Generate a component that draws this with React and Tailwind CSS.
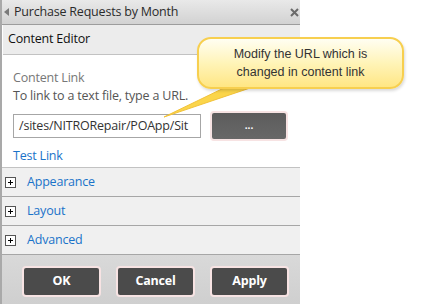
export default function App() {
  const sections = ["Appearance", "Layout", "Advanced"];
  return (
    <div className="relative w-[441px] h-[304px] bg-white overflow-hidden font-['Open_Sans','Noto_Sans',sans-serif]">
      {/* Tool pane */}
      <div className="w-[300px] h-[304px] flex flex-col border-l-2 border-[#a9a9a9]">
        {/* Title bar */}
        <div className="h-[25px] flex items-center bg-gradient-to-b from-[#e9e9e9] to-[#d2d2d2] border-b border-[#9c9c9c]">
          <svg width="5" height="8" viewBox="0 0 5 8" className="ml-[2px] mr-[5px]">
            <path d="M5 0 L0 4 L5 8 Z" fill="#7a7a7a" />
          </svg>
          <span className="text-[12.5px] text-[#2b2b2b] tracking-[-0.2px]">Purchase Requests by Month</span>
          <svg width="9" height="9" viewBox="0 0 9 9" className="ml-auto mr-[1px]">
            <path d="M1 1 L8 8 M8 1 L1 8" stroke="#6a6a6a" strokeWidth="2" />
          </svg>
        </div>

        {/* Content Editor heading */}
        <div className="h-[30px] flex items-center pl-[5px] bg-[#ececec] border-b border-[#c2c2c2] ml-[1px]">
          <span className="text-[12.5px] text-[#111] tracking-[-0.2px]">Content Editor</span>
        </div>

        {/* Body */}
        <div className="h-[113px] bg-white pl-[11px] pt-[14px] border-b border-[#c2c2c2]">
          <div className="text-[12.5px] leading-[18px] text-[#777] tracking-[-0.2px]">Content Link</div>
          <div className="text-[12.5px] leading-[18px] text-[#555] tracking-[-0.2px]">To link to a text file, type a URL.</div>
          <div className="flex items-center mt-[6px]">
            <div className="w-[188px] h-[24px] border border-[#a6a6a6] flex items-center pl-[5px] text-[12.5px] text-[#333] tracking-[-0.2px] overflow-hidden whitespace-nowrap">
              /sites/NITRORepair/POApp/Sit
            </div>
            <div className="ml-[9px] w-[78px] h-[30px] rounded-[4px] border-2 border-[#f7e3e3] bg-gradient-to-b from-[#5c5c5c] to-[#686868] flex items-center justify-center text-white text-[10px] font-bold leading-none pb-[2px]">
              ...
            </div>
          </div>
          <div className="text-[12.5px] leading-[18px] text-[#1a73c9] tracking-[-0.2px] mt-[6px]">Test Link</div>
        </div>

        {/* Collapsible sections */}
        {sections.map((s) => (
          <div key={s} className="h-[29px] flex items-center bg-[#f0f0f0] border-b border-[#a6a6a6]">
            <svg width="11" height="11" viewBox="0 0 11 11" className="ml-[3px] mr-[11px]">
              <rect x="0.5" y="0.5" width="10" height="10" fill="#fff" stroke="#555" />
              <path d="M3 5.5 H8 M5.5 3 V8" stroke="#000" strokeWidth="1" />
            </svg>
            <span className="text-[12.5px] text-[#1a73c9] tracking-[-0.2px]">{s}</span>
          </div>
        ))}

        {/* Footer buttons */}
        <div className="flex-1 bg-gradient-to-b from-[#d9d9d9] to-[#cfcfcf] flex items-start pt-[11px] pl-[20px] gap-[15px]">
          {["OK", "Cancel", "Apply"].map((b) => (
            <div
              key={b}
              className="w-[79px] h-[31px] rounded-[4px] border-2 border-[#f7e3e3] bg-[#4b4b4b] flex items-center justify-center text-white text-[12.5px] font-bold tracking-[-0.2px]"
            >
              {b}
            </div>
          ))}
        </div>
      </div>

      {/* Callout */}
      <svg className="absolute left-[160px] top-[80px]" width="100" height="40" viewBox="0 0 100 40">
        <path d="M68 6 L4 37 L96 6 Z" fill="#fbd54a" stroke="#f2c23a" strokeWidth="1" />
      </svg>
      <div className="absolute left-[197px] top-[37px] w-[207px] h-[52px] rounded-[14px] border-2 border-[#f7cf4f] bg-gradient-to-b from-[#fffef2] via-[#fff4b8] to-[#ffe683] shadow-[1px_2px_3px_rgba(0,0,0,0.15)] flex flex-col items-center justify-center font-['Liberation_Sans',Arial,sans-serif] text-[12.5px] leading-[18px] text-[#333]">
        <div>Modify the URL which is</div>
        <div>changed in content link</div>
      </div>
    </div>
  );
}
